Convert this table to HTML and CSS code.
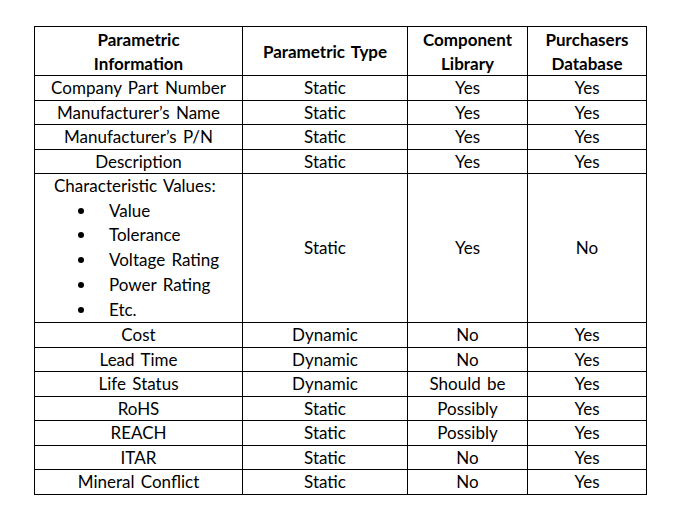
FILE: index.html
```html
<!DOCTYPE html>
<html>
<head>
<meta charset="utf-8">
<link rel="stylesheet" href="styles.css">
</head>
<body>
<table class="grid">
  <colgroup>
    <col class="c1"><col class="c2"><col class="c3"><col class="c4">
  </colgroup>
  <thead>
    <tr class="head">
      <th>Parametric<br>Information</th>
      <th>Parametric Type</th>
      <th>Component<br>Library</th>
      <th>Purchasers<br>Database</th>
    </tr>
  </thead>
  <tbody>
    <tr><td>Company Part Number</td><td>Static</td><td>Yes</td><td>Yes</td></tr>
    <tr><td>Manufacturer’s Name</td><td>Static</td><td>Yes</td><td>Yes</td></tr>
    <tr><td>Manufacturer’s P/N</td><td>Static</td><td>Yes</td><td>Yes</td></tr>
    <tr><td>Description</td><td>Static</td><td>Yes</td><td>Yes</td></tr>
    <tr class="tall">
      <td class="chars">
        <div class="chars-title">Characteristic Values:</div>
        <ul class="bullets">
          <li>Value</li>
          <li>Tolerance</li>
          <li>Voltage Rating</li>
          <li>Power Rating</li>
          <li>Etc.</li>
        </ul>
      </td>
      <td>Static</td><td>Yes</td><td>No</td>
    </tr>
    <tr><td>Cost</td><td>Dynamic</td><td>No</td><td>Yes</td></tr>
    <tr><td>Lead Time</td><td>Dynamic</td><td>No</td><td>Yes</td></tr>
    <tr><td>Life Status</td><td>Dynamic</td><td>Should be</td><td>Yes</td></tr>
    <tr><td>RoHS</td><td>Static</td><td>Possibly</td><td>Yes</td></tr>
    <tr><td>REACH</td><td>Static</td><td>Possibly</td><td>Yes</td></tr>
    <tr><td>ITAR</td><td>Static</td><td>No</td><td>Yes</td></tr>
    <tr><td>Mineral Conflict</td><td>Static</td><td>No</td><td>Yes</td></tr>
  </tbody>
</table>
</body>
</html>
```

FILE: styles.css
```css
html, body {
  margin: 0;
  background: #ffffff;
}
body {
  padding: 26px 0 0 34px;
  font-family: "Lato", "Liberation Sans", sans-serif;
  font-size: 17px;
  color: #000000;
}
.grid {
  border-collapse: collapse;
  table-layout: fixed;
  width: 612px;
}
.c1 { width: 208px; }
.c2 { width: 165px; }
.c3 { width: 120px; }
.c4 { width: 119px; }
.grid th, .grid td {
  border: 1px solid #000000;
  padding: 1px 4px 0;
  text-align: center;
  vertical-align: middle;
  line-height: 22.5px;
  word-spacing: 2px;
}
.grid th {
  font-weight: bold;
  line-height: 23.5px;
}
.grid td.chars {
  text-align: left;
  padding: 0 4px 0 19px;
}
.chars-title {
  line-height: 24.7px;
}
.bullets {
  margin: 0;
  padding: 0 0 0 55px;
  list-style: none;
}
.bullets li {
  position: relative;
  line-height: 24.7px;
}
.bullets li::before {
  content: "";
  position: absolute;
  left: -31px;
  top: 9px;
  width: 6px;
  height: 6px;
  border-radius: 50%;
  background: #000000;
}
```
